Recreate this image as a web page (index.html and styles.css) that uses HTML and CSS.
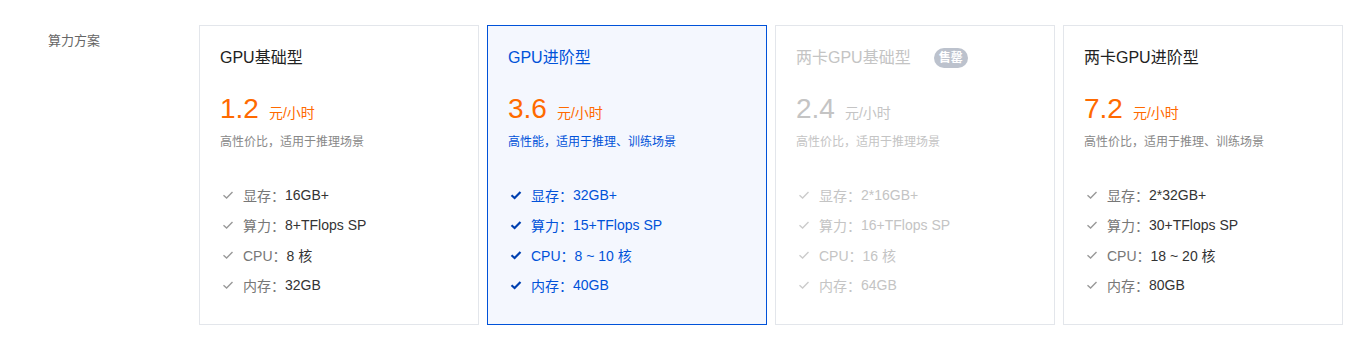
FILE: index.html
```html
<!DOCTYPE html>
<html lang="zh-CN">
<head>
    <meta charset="UTF-8">
    <meta name="viewport" content="width=device-width, initial-scale=1.0">
    <title>算力方案</title>
    <link rel="stylesheet" href="styles.css">
</head>
<body>
    <div class="plan-row">
        <div class="plan-label">算力方案</div>

        <div class="plan-list">
            <!-- GPU基础型 -->
            <div class="plan-card">
                <div class="plan-title">GPU基础型</div>
                <div class="plan-price"><span class="price-num">1.2</span><span class="price-unit">元/小时</span></div>
                <div class="plan-desc">高性价比，适用于推理场景</div>
                <ul class="plan-specs">
                    <li><svg class="check" viewBox="0 0 12 12"><path d="M1.5 6.2 L4.6 9 L10.5 3"/></svg><span class="spec-key">显存：</span><span class="spec-val">16GB+</span></li>
                    <li><svg class="check" viewBox="0 0 12 12"><path d="M1.5 6.2 L4.6 9 L10.5 3"/></svg><span class="spec-key">算力：</span><span class="spec-val">8+TFlops SP</span></li>
                    <li><svg class="check" viewBox="0 0 12 12"><path d="M1.5 6.2 L4.6 9 L10.5 3"/></svg><span class="spec-key">CPU：</span><span class="spec-val">8 核</span></li>
                    <li><svg class="check" viewBox="0 0 12 12"><path d="M1.5 6.2 L4.6 9 L10.5 3"/></svg><span class="spec-key">内存：</span><span class="spec-val">32GB</span></li>
                </ul>
            </div>

            <!-- GPU进阶型 (selected) -->
            <div class="plan-card selected">
                <div class="plan-title">GPU进阶型</div>
                <div class="plan-price"><span class="price-num">3.6</span><span class="price-unit">元/小时</span></div>
                <div class="plan-desc">高性能，适用于推理、训练场景</div>
                <ul class="plan-specs">
                    <li><svg class="check" viewBox="0 0 12 12"><path d="M1.5 6.2 L4.6 9 L10.5 3"/></svg><span class="spec-key">显存：</span><span class="spec-val">32GB+</span></li>
                    <li><svg class="check" viewBox="0 0 12 12"><path d="M1.5 6.2 L4.6 9 L10.5 3"/></svg><span class="spec-key">算力：</span><span class="spec-val">15+TFlops SP</span></li>
                    <li><svg class="check" viewBox="0 0 12 12"><path d="M1.5 6.2 L4.6 9 L10.5 3"/></svg><span class="spec-key">CPU：</span><span class="spec-val">8 ~ 10 核</span></li>
                    <li><svg class="check" viewBox="0 0 12 12"><path d="M1.5 6.2 L4.6 9 L10.5 3"/></svg><span class="spec-key">内存：</span><span class="spec-val">40GB</span></li>
                </ul>
            </div>

            <!-- 两卡GPU基础型 (sold out) -->
            <div class="plan-card disabled">
                <div class="plan-title">两卡GPU基础型<span class="badge">售罄</span></div>
                <div class="plan-price"><span class="price-num">2.4</span><span class="price-unit">元/小时</span></div>
                <div class="plan-desc">高性价比，适用于推理场景</div>
                <ul class="plan-specs">
                    <li><svg class="check" viewBox="0 0 12 12"><path d="M1.5 6.2 L4.6 9 L10.5 3"/></svg><span class="spec-key">显存：</span><span class="spec-val">2*16GB+</span></li>
                    <li><svg class="check" viewBox="0 0 12 12"><path d="M1.5 6.2 L4.6 9 L10.5 3"/></svg><span class="spec-key">算力：</span><span class="spec-val">16+TFlops SP</span></li>
                    <li><svg class="check" viewBox="0 0 12 12"><path d="M1.5 6.2 L4.6 9 L10.5 3"/></svg><span class="spec-key">CPU：</span><span class="spec-val">16 核</span></li>
                    <li><svg class="check" viewBox="0 0 12 12"><path d="M1.5 6.2 L4.6 9 L10.5 3"/></svg><span class="spec-key">内存：</span><span class="spec-val">64GB</span></li>
                </ul>
            </div>

            <!-- 两卡GPU进阶型 -->
            <div class="plan-card">
                <div class="plan-title">两卡GPU进阶型</div>
                <div class="plan-price"><span class="price-num">7.2</span><span class="price-unit">元/小时</span></div>
                <div class="plan-desc">高性价比，适用于推理、训练场景</div>
                <ul class="plan-specs">
                    <li><svg class="check" viewBox="0 0 12 12"><path d="M1.5 6.2 L4.6 9 L10.5 3"/></svg><span class="spec-key">显存：</span><span class="spec-val">2*32GB+</span></li>
                    <li><svg class="check" viewBox="0 0 12 12"><path d="M1.5 6.2 L4.6 9 L10.5 3"/></svg><span class="spec-key">算力：</span><span class="spec-val">30+TFlops SP</span></li>
                    <li><svg class="check" viewBox="0 0 12 12"><path d="M1.5 6.2 L4.6 9 L10.5 3"/></svg><span class="spec-key">CPU：</span><span class="spec-val">18 ~ 20 核</span></li>
                    <li><svg class="check" viewBox="0 0 12 12"><path d="M1.5 6.2 L4.6 9 L10.5 3"/></svg><span class="spec-key">内存：</span><span class="spec-val">80GB</span></li>
                </ul>
            </div>
        </div>
    </div>
</body>
</html>
```

FILE: styles.css
```css
* {
    margin: 0;
    padding: 0;
    box-sizing: border-box;
}

body {
    font-family: "Liberation Sans", "Noto Sans CJK SC", sans-serif;
    background-color: #ffffff;
    color: #333333;
}

.plan-row {
    display: flex;
    padding: 25px 0 0 48px;
}

.plan-label {
    width: 151px;
    flex-shrink: 0;
    margin-top: 6px;
    font-size: 13px;
    line-height: 20px;
    color: #666666;
}

.plan-list {
    display: flex;
    gap: 8px;
}

.plan-card {
    width: 280px;
    height: 300px;
    border: 1px solid #e3e6eb;
    background-color: #ffffff;
    padding: 20px 20px 0 20px;
}

.plan-title {
    display: flex;
    align-items: center;
    font-size: 16px;
    line-height: 24px;
    color: #222222;
}

.badge {
    margin-left: 23px;
    display: inline-block;
    height: 20px;
    line-height: 20px;
    padding: 0 5px;
    border-radius: 10px;
    background-color: #bcc2cd;
    color: #ffffff;
    font-size: 12px;
    font-weight: bold;
}

.plan-price {
    margin-top: 19px;
    height: 40px;
    line-height: 40px;
    color: #ff6a00;
    white-space: nowrap;
}

.price-num {
    font-size: 28px;
}

.price-unit {
    margin-left: 10px;
    font-size: 14px;
}

.plan-desc {
    margin-top: 3px;
    font-size: 12px;
    line-height: 20px;
    color: #888888;
}

.plan-specs {
    list-style: none;
    margin-top: 28px;
}

.plan-specs li {
    display: flex;
    align-items: center;
    height: 30px;
    font-size: 14px;
}

.check {
    width: 12px;
    height: 12px;
    margin: 0 9px 0 2px;
    fill: none;
    stroke: #999999;
    stroke-width: 1.4;
}

.spec-key {
    color: #777777;
}

.spec-val {
    color: #333333;
}

/* selected card */
.plan-card.selected {
    border-color: #0052d9;
    background-color: #f4f7fe;
}

.selected .plan-title,
.selected .plan-desc,
.selected .spec-key,
.selected .spec-val {
    color: #0052d9;
}

.selected .check {
    stroke: #0040b0;
    stroke-width: 2.2;
}

/* sold out card */
.disabled .plan-title,
.disabled .plan-price,
.disabled .plan-desc,
.disabled .spec-key,
.disabled .spec-val {
    color: #c4c4c4;
}

.disabled .check {
    stroke: #cccccc;
}
```
